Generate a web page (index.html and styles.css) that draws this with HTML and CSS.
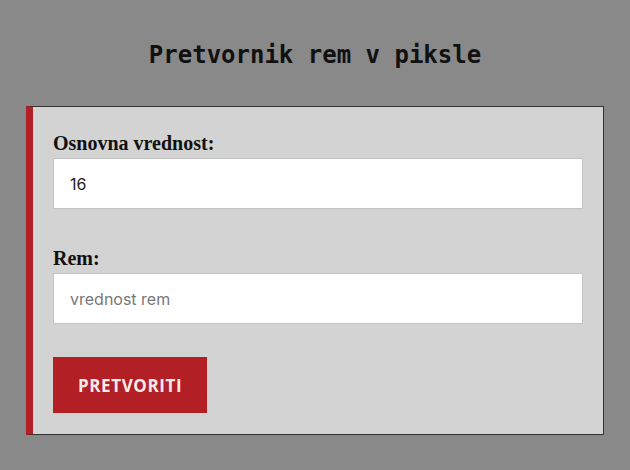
FILE: index.html
```html
<!DOCTYPE html>
<html lang="sl">
<head>
    <meta charset="UTF-8">
    <meta name="viewport" content="width=device-width, initial-scale=1.0">
    <title>Pretvornik rem v piksle</title>
    <link rel="stylesheet" href="styles.css">
</head>
<body>
    <h1>Pretvornik rem v piksle</h1>

    <div class="converter">
        <form onsubmit="return false">
            <div class="field">
                <label for="base">Osnovna vrednost:</label>
                <input type="text" id="base" name="base" value="16">
            </div>

            <div class="field">
                <label for="rem">Rem:</label>
                <input type="text" id="rem" name="rem" placeholder="vrednost rem">
            </div>

            <button type="submit">PRETVORITI</button>
        </form>
    </div>
</body>
</html>
```

FILE: styles.css
```css
body {
    margin: 0;
    padding: 40px 26px 0;
    background-color: #898989;
    font-family: Inter, Roboto, sans-serif;
}
h1 {
    margin: 0 0 36px;
    font-family: "DejaVu Sans Mono", monospace;
    font-size: 24px;
    line-height: 30px;
    font-weight: bold;
    text-align: center;
    color: #111;
}
.converter {
    background-color: #d3d3d3;
    border: 1px solid #333;
    border-left: 7px solid #b21f25;
    padding: 25px 20px 21px 20px;
}
.field {
    margin-bottom: 38px;
}
.field:last-of-type {
    margin-bottom: 33px;
}
label {
    display: block;
    font-family: "Liberation Serif", serif;
    font-size: 20px;
    line-height: 22px;
    font-weight: bold;
    color: #111;
    margin-bottom: 4px;
}
input[type="text"] {
    display: block;
    box-sizing: border-box;
    width: 100%;
    height: 51px;
    padding: 0 16px;
    border: 1px solid #c4c4c4;
    background: #fff;
    font-family: Inter, Roboto, sans-serif;
    font-size: 16px;
    color: #222;
    outline: none;
}
input::placeholder {
    color: #777;
}
button {
    display: block;
    height: 56px;
    padding: 0 25px;
    border: none;
    background-color: #b21f25;
    color: #fbeaea;
    font-family: "Open Sans", sans-serif;
    font-size: 17px;
    font-weight: bold;
    letter-spacing: 0.6px;
    cursor: pointer;
}
button:hover {
    background-color: #9c1a1f;
}
```
